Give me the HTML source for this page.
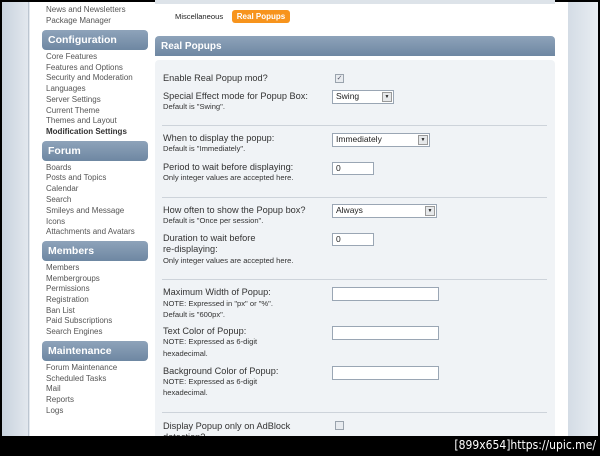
<!DOCTYPE html><html><head><style>
body{margin:0;width:600px;height:456px;background:#000;position:relative;overflow:hidden;font-family:"Liberation Sans",sans-serif}
.a{position:absolute}
.t{position:absolute;font-size:8px;color:#555;white-space:nowrap;line-height:10px;margin-top:1px}
.l{position:absolute;font-size:9.2px;color:#333;white-space:nowrap;line-height:11px}
.s{position:absolute;font-size:7.6px;color:#333;white-space:nowrap;line-height:10px}
.h{position:absolute;left:42px;width:106px;height:20px;border-radius:4px;background:linear-gradient(#8ea3ba,#6e87a2);color:#fff;font-weight:bold;font-size:10.5px;line-height:20px;text-indent:6px;box-sizing:border-box}
.in{position:absolute;background:#fff;border:1px solid #9aa6b4;box-sizing:border-box;font-size:8.5px;line-height:11px;padding-left:3px;color:#222}
.dd{position:absolute;right:1px;top:1px;width:10px;bottom:1px;background:#e6e8ea;border:1px solid #999;box-sizing:border-box;font-size:5px;text-align:center;line-height:9px}
.sep{position:absolute;left:162px;width:385px;height:1px;background:#cdd3da}
.cb{position:absolute;width:9px;height:9px;border:1px solid #9aa3ad;background:#e8ebef;box-sizing:border-box;font-size:7px;line-height:7px;text-align:center;color:#556}
</style></head><body>
<div class="a" style="left:2px;top:2px;width:596px;height:434px;background:linear-gradient(90deg,#c9d3de,#e4e9ef 28px,#fff 28px)"></div>
<div class="a" style="left:568px;top:2px;width:30px;height:434px;background:linear-gradient(90deg,#d4dce5,#e8edf2)"></div>
<div class="a" style="left:28px;top:2px;width:1px;height:434px;background:#bcc6d1"></div>
<div class="a" style="left:155px;top:0;width:400px;height:4px;background:#dde3e9"></div>
<div class="t" style="left:46px;top:4px">News and Newsletters</div>
<div class="t" style="left:46px;top:15px">Package Manager</div>
<div class="h" style="top:30px">Configuration</div>
<div class="t" style="left:46px;top:51px">Core Features</div>
<div class="t" style="left:46px;top:62px">Features and Options</div>
<div class="t" style="left:46px;top:72px">Security and Moderation</div>
<div class="t" style="left:46px;top:83px">Languages</div>
<div class="t" style="left:46px;top:94px">Server Settings</div>
<div class="t" style="left:46px;top:105px">Current Theme</div>
<div class="t" style="left:46px;top:115px">Themes and Layout</div>
<div class="t" style="left:46px;top:126px;font-weight:bold;color:#333">Modification Settings</div>
<div class="h" style="top:141px">Forum</div>
<div class="t" style="left:46px;top:162px">Boards</div>
<div class="t" style="left:46px;top:172px">Posts and Topics</div>
<div class="t" style="left:46px;top:183px">Calendar</div>
<div class="t" style="left:46px;top:194px">Search</div>
<div class="t" style="left:46px;top:205px">Smileys and Message</div>
<div class="t" style="left:46px;top:216px">Icons</div>
<div class="t" style="left:46px;top:226px">Attachments and Avatars</div>
<div class="h" style="top:241px">Members</div>
<div class="t" style="left:46px;top:262px">Members</div>
<div class="t" style="left:46px;top:273px">Membergroups</div>
<div class="t" style="left:46px;top:283px">Permissions</div>
<div class="t" style="left:46px;top:294px">Registration</div>
<div class="t" style="left:46px;top:305px">Ban List</div>
<div class="t" style="left:46px;top:315px">Paid Subscriptions</div>
<div class="t" style="left:46px;top:326px">Search Engines</div>
<div class="h" style="top:341px">Maintenance</div>
<div class="t" style="left:46px;top:362px">Forum Maintenance</div>
<div class="t" style="left:46px;top:373px">Scheduled Tasks</div>
<div class="t" style="left:46px;top:383px">Mail</div>
<div class="t" style="left:46px;top:394px">Reports</div>
<div class="t" style="left:46px;top:405px">Logs</div>

<div class="s" style="left:175px;top:12px;color:#222">Miscellaneous</div>
<div class="a" style="left:232px;top:10px;width:58px;height:13px;border-radius:3px;background:#f7941d;color:#fff;font-weight:bold;font-size:8px;line-height:13px;text-align:center">Real Popups</div>
<div class="a" style="left:155px;top:36px;width:400px;height:20px;border-radius:4px 4px 0 0;background:linear-gradient(#8ea3ba,#6e87a2);color:#fff;font-weight:bold;font-size:10px;line-height:21px;text-indent:6px">Real Popups</div>
<div class="a" style="left:155px;top:60px;width:400px;height:376px;background:#f0f3f6;border-radius:4px 4px 0 0"></div>

<div class="l" style="left:163px;top:73px">Enable Real Popup mod?</div>
<div class="cb" style="left:335px;top:74px">✓</div>
<div class="l" style="left:163px;top:91px">Special Effect mode for Popup Box:</div>
<div class="s" style="left:163px;top:102px">Default is "Swing".</div>
<div class="in" style="left:332px;top:90px;width:62px;height:14px">Swing<div class="dd">▼</div></div>
<div class="sep" style="top:125px"></div>
<div class="l" style="left:163px;top:133px">When to display the popup:</div>
<div class="s" style="left:163px;top:144px">Default is "Immediately".</div>
<div class="in" style="left:332px;top:133px;width:98px;height:14px">Immediately<div class="dd">▼</div></div>
<div class="l" style="left:163px;top:162px">Period to wait before displaying:</div>
<div class="s" style="left:163px;top:173px">Only integer values are accepted here.</div>
<div class="in" style="left:332px;top:162px;width:42px;height:13px">0</div>
<div class="sep" style="top:197px"></div>
<div class="l" style="left:163px;top:205px">How often to show the Popup box?</div>
<div class="s" style="left:163px;top:216px">Default is "Once per session".</div>
<div class="in" style="left:332px;top:204px;width:105px;height:14px">Always<div class="dd">▼</div></div>
<div class="l" style="left:163px;top:233px">Duration to wait before</div>
<div class="l" style="left:163px;top:244px">re-displaying:</div>
<div class="s" style="left:163px;top:256px">Only integer values are accepted here.</div>
<div class="in" style="left:332px;top:233px;width:42px;height:13px">0</div>
<div class="sep" style="top:279px"></div>
<div class="l" style="left:163px;top:287px">Maximum Width of Popup:</div>
<div class="s" style="left:163px;top:299px">NOTE: Expressed in "px" or "%".</div>
<div class="s" style="left:163px;top:310px">Default is "600px".</div>
<div class="in" style="left:332px;top:287px;width:107px;height:14px"></div>
<div class="l" style="left:163px;top:326px">Text Color of Popup:</div>
<div class="s" style="left:163px;top:337px">NOTE: Expressed as 6-digit</div>
<div class="s" style="left:163px;top:349px">hexadecimal.</div>
<div class="in" style="left:332px;top:326px;width:107px;height:14px"></div>
<div class="l" style="left:163px;top:366px">Background Color of Popup:</div>
<div class="s" style="left:163px;top:377px">NOTE: Expressed as 6-digit</div>
<div class="s" style="left:163px;top:388px">hexadecimal.</div>
<div class="in" style="left:332px;top:366px;width:107px;height:14px"></div>
<div class="sep" style="top:412px"></div>
<div class="l" style="left:163px;top:421px">Display Popup only on AdBlock</div>
<div class="l" style="left:163px;top:432px">detection?</div>
<div class="cb" style="left:335px;top:421px"></div>
<div class="a" style="left:0;top:436px;width:600px;height:20px;background:#000"></div>
<div class="a" style="right:4px;top:438px;color:#fff;font-size:12px;font-family:'DejaVu Sans Condensed','Liberation Sans',sans-serif;line-height:14px">[899x654]https://upic.me/</div>
</body></html>
